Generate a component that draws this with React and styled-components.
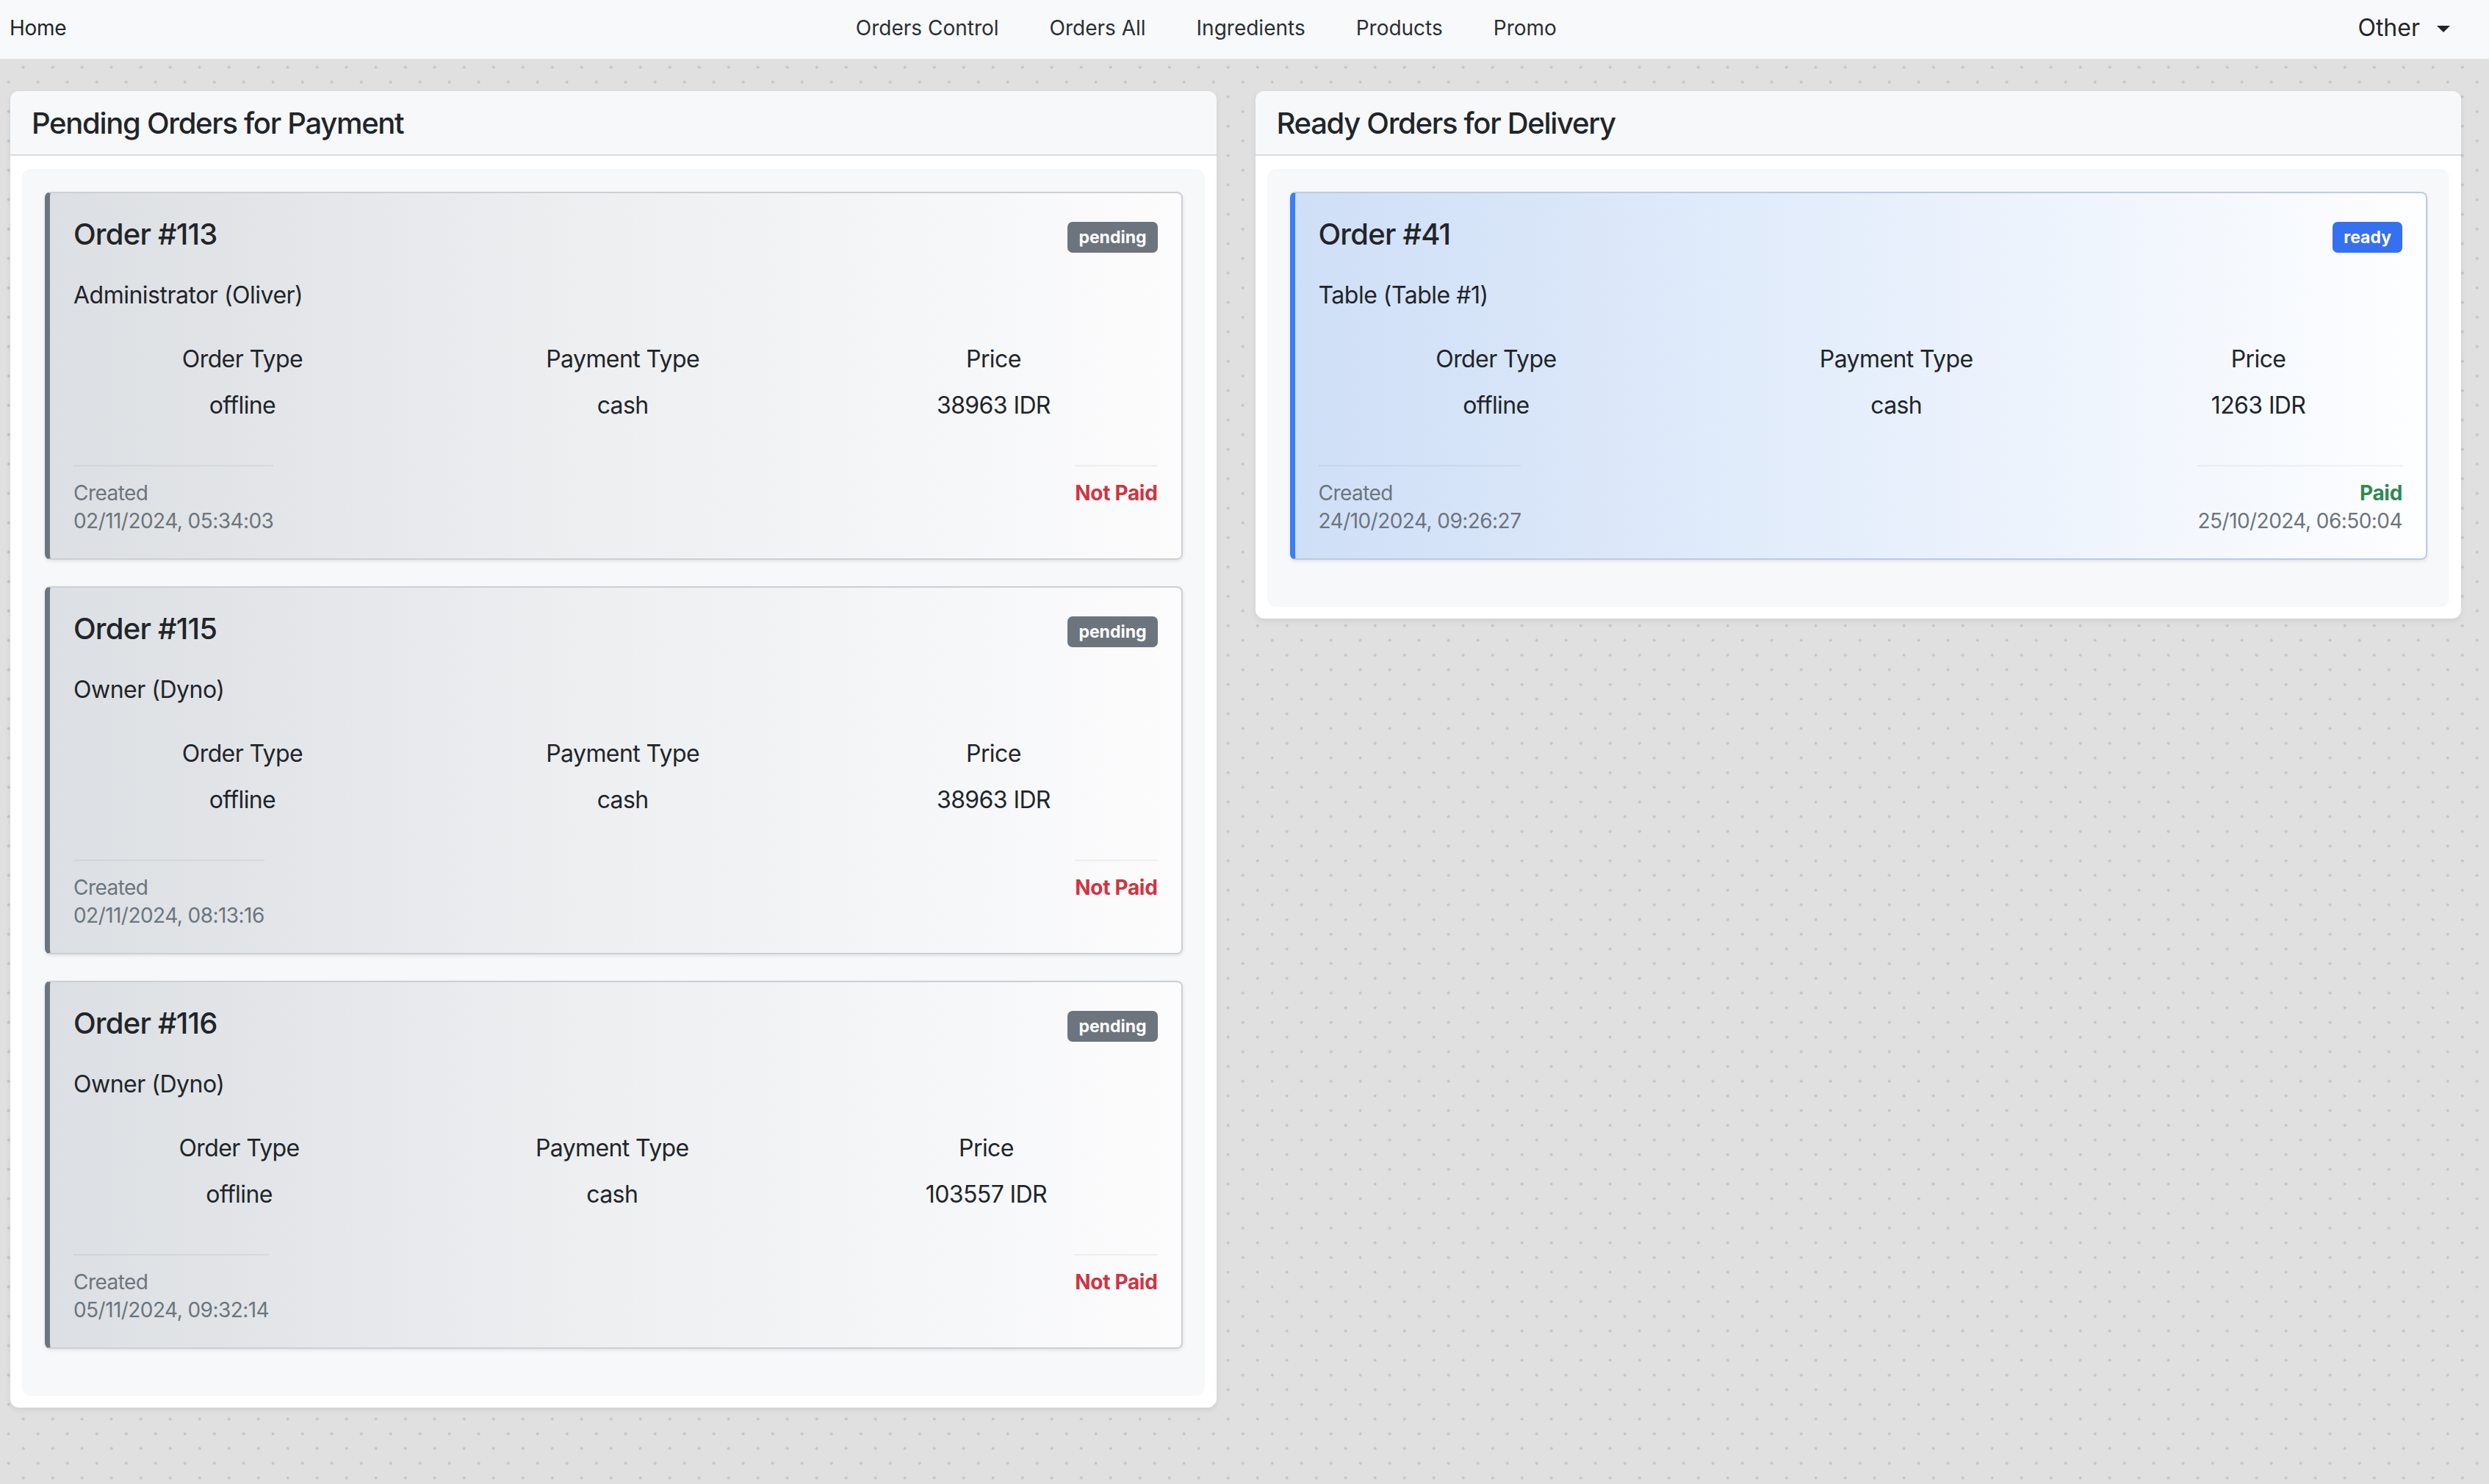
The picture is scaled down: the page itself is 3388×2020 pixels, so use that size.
import React from "react";
import styled, { createGlobalStyle } from "styled-components";

const GlobalStyle = createGlobalStyle`
  html, body { margin: 0; padding: 0; }
  body {
    font-family: Inter, "Noto Sans", "Liberation Sans", sans-serif;
    color: #212529;
    background-color: #e0e0e0;
    background-image:
      radial-gradient(circle, #c5c5c5 1.6px, transparent 2px),
      radial-gradient(circle, #c5c5c5 1.6px, transparent 2px);
    background-size: 40px 40px, 40px 40px;
    background-position: 11.7px -8.3px, -8.3px 11.7px;
    min-height: 100vh;
  }
  * { box-sizing: border-box; }
`;

const Navbar = styled.nav`
  display: flex;
  align-items: center;
  height: 80px;
  background: #f8f9fa;
  padding: 0 53px 4px 13px;
`;

const Brand = styled.a`
  font-size: 28px;
  color: #212529;
  text-decoration: none;
  line-height: 1;
  letter-spacing: -0.3px;
`;

const NavLinks = styled.ul`
  display: flex;
  gap: 69px;
  list-style: none;
  margin: 0 auto;
  padding: 0;
  position: relative;
  left: -8px;
`;

const NavLink = styled.li`
  font-size: 28px;
  color: #2b2f33;
  line-height: 1;
`;

const Dropdown = styled.div`
  display: flex;
  align-items: center;
  gap: 23px;
  font-size: 32px;
  line-height: 1;
  color: #212529;
`;

const Caret = styled.span`
  width: 0;
  height: 0;
  border-left: 9px solid transparent;
  border-right: 9px solid transparent;
  border-top: 9.5px solid #212529;
  margin-top: 2px;
`;

const Main = styled.main`
  display: grid;
  grid-template-columns: 1fr 1fr;
  column-gap: 53px;
  align-items: start;
  padding: 44px 38px 40px 14px;
`;

const Panel = styled.section`
  background: #ffffff;
  border-radius: 12px;
  overflow: hidden;
  box-shadow: 0 3px 8px rgba(0, 0, 0, 0.08);
`;

const PanelHeader = styled.header`
  background: #f7f8fa;
  border-bottom: 2px solid #d9dbde;
  padding: 20px 29px 18px;
`;

const PanelTitle = styled.h5`
  margin: 0;
  font-size: 40px;
  line-height: 48px;
  font-weight: 500;
  letter-spacing: -1.3px;
`;

const PanelBody = styled.div`
  padding: 18px 16px 16px;
`;

const CardList = styled.div`
  display: flex;
  flex-direction: column;
  gap: 36px;
  background: #f7f8fa;
  border-radius: 12px;
  padding: 31px 30px 64px 31px;
`;

const variants = {
  pending: {
    bar: "#6c757d",
    border: "#cdcfd2",
    bg: "linear-gradient(90deg, #dcdfe3 0%, #eceef0 45%, #fcfcfd 100%)",
    badge: "#6c757d",
  },
  ready: {
    bar: "#3b7ff5",
    border: "#bccbe0",
    bg: "linear-gradient(90deg, #cfdff7 0%, #e3edfb 45%, #fdfeff 100%)",
    badge: "#3570f0",
  },
};

const OrderCard = styled.article`
  background: ${(p) => variants[p.$variant].bg};
  border: 2px solid ${(p) => variants[p.$variant].border};
  border-left: 7px solid ${(p) => variants[p.$variant].bar};
  border-radius: 8px;
  padding: 32px 32px 32px 32px;
  box-shadow: 0 2px 5px rgba(0, 0, 0, 0.09);
`;

const TitleRow = styled.div`
  display: flex;
  justify-content: space-between;
  align-items: center;
  height: 48px;
  margin-bottom: 35px;
`;

const OrderTitle = styled.h5`
  margin: 0;
  font-size: 40px;
  line-height: 48px;
  font-weight: 500;
  letter-spacing: -0.8px;
`;

const Badge = styled.span`
  display: inline-block;
  background: ${(p) => variants[p.$variant].badge};
  color: #fff;
  font-size: 23px;
  font-weight: 700;
  line-height: 26px;
  padding: 8px 15px;
  border-radius: 7px;
  margin-top: 7px;
`;

const Customer = styled.p`
  margin: 0 0 39px;
  font-size: 32px;
  line-height: 48px;
  letter-spacing: -0.5px;
`;

const InfoTable = styled.table`
  width: calc(100% - 10px);
  margin: 0 0 57px 2px;
  border-collapse: collapse;
  font-size: 32px;
  line-height: 48px;
  text-align: center;
  letter-spacing: -0.6px;
`;

const HeadCell = styled.th`
  font-weight: 400;
  padding: 0 0 15px;
`;

const Cell = styled.td`
  padding: 0;
`;

const Footer = styled.div`
  display: flex;
  justify-content: space-between;
  align-items: flex-start;
`;

const FooterBlock = styled.div`
  border-top: 2px solid rgba(0, 0, 0, 0.05);
  padding-top: 17px;
  font-size: 28px;
  line-height: 38px;
  letter-spacing: -0.55px;
  text-align: ${(p) => (p.$right ? "right" : "left")};
  color: #6c757d;
`;

const Status = styled.div`
  font-weight: 700;
  letter-spacing: -0.3px;
  color: ${(p) => (p.$paid ? "#2f8a4f" : "#d1343f")};
`;

const pending = [
  { id: 113, who: "Administrator (Oliver)", type: "offline", pay: "cash", price: "38963 IDR", created: "02/11/2024, 05:34:03" },
  { id: 115, who: "Owner (Dyno)", type: "offline", pay: "cash", price: "38963 IDR", created: "02/11/2024, 08:13:16" },
  { id: 116, who: "Owner (Dyno)", type: "offline", pay: "cash", price: "103557 IDR", created: "05/11/2024, 09:32:14" },
];

const ready = [
  { id: 41, who: "Table (Table #1)", type: "offline", pay: "cash", price: "1263 IDR", created: "24/10/2024, 09:26:27", paidAt: "25/10/2024, 06:50:04" },
];

function Order({ o, variant }) {
  const isReady = variant === "ready";
  return (
    <OrderCard $variant={variant}>
      <TitleRow>
        <OrderTitle>Order #{o.id}</OrderTitle>
        <Badge $variant={variant}>{isReady ? "ready" : "pending"}</Badge>
      </TitleRow>
      <Customer>{o.who}</Customer>
      <InfoTable>
        <thead>
          <tr>
            <HeadCell>Order Type</HeadCell>
            <HeadCell>Payment Type</HeadCell>
            <HeadCell>Price</HeadCell>
          </tr>
        </thead>
        <tbody>
          <tr>
            <Cell>{o.type}</Cell>
            <Cell>{o.pay}</Cell>
            <Cell>{o.price}</Cell>
          </tr>
        </tbody>
      </InfoTable>
      <Footer>
        <FooterBlock>
          <div>Created</div>
          <div>{o.created}</div>
        </FooterBlock>
        <FooterBlock $right>
          <Status $paid={isReady}>{isReady ? "Paid" : "Not Paid"}</Status>
          {o.paidAt && <div>{o.paidAt}</div>}
        </FooterBlock>
      </Footer>
    </OrderCard>
  );
}

export default function App() {
  return (
    <>
      <GlobalStyle />
      <Navbar>
        <Brand>Home</Brand>
        <NavLinks>
          <NavLink>Orders Control</NavLink>
          <NavLink>Orders All</NavLink>
          <NavLink>Ingredients</NavLink>
          <NavLink>Products</NavLink>
          <NavLink>Promo</NavLink>
        </NavLinks>
        <Dropdown>
          Other
          <Caret />
        </Dropdown>
      </Navbar>
      <Main>
        <Panel>
          <PanelHeader>
            <PanelTitle>Pending Orders for Payment</PanelTitle>
          </PanelHeader>
          <PanelBody>
            <CardList>
              {pending.map((o) => (
                <Order key={o.id} o={o} variant="pending" />
              ))}
            </CardList>
          </PanelBody>
        </Panel>
        <Panel>
          <PanelHeader>
            <PanelTitle>Ready Orders for Delivery</PanelTitle>
          </PanelHeader>
          <PanelBody>
            <CardList>
              {ready.map((o) => (
                <Order key={o.id} o={o} variant="ready" />
              ))}
            </CardList>
          </PanelBody>
        </Panel>
      </Main>
    </>
  );
}
